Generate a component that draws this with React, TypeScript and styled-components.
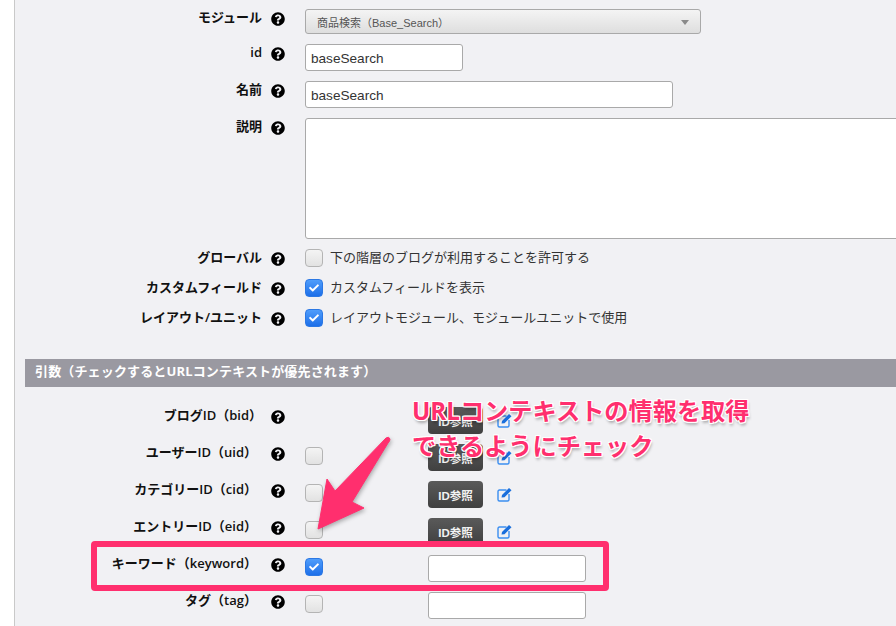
import styled, { createGlobalStyle } from "styled-components";
import { FaQuestionCircle, FaCheck } from "react-icons/fa";

const GlobalStyle = createGlobalStyle`
	html, body {
		margin: 0;
		padding: 0;
		height: 626px;
		overflow: hidden;
		background: #fff;
		font-family: "Liberation Sans", "Noto Sans CJK JP", sans-serif;
		color: #222;
	}
`

const Page = styled.div`
	position: relative;
	width: 896px;
	height: 626px;
	overflow: hidden;
	padding-left: 14px;
	box-sizing: border-box;
`

const Panel = styled.main`
	height: 100%;
	background: #f1f1f4;
	border-left: 1px solid #c9c9c9;
	padding-top: 9px;
	box-sizing: border-box;
	display: flex;
	flex-direction: column;
`

const Rows = styled.div<{ $gap: number }>`
	display: flex;
	flex-direction: column;
	gap: ${(p) => p.$gap}px;
`

const Row = styled.div`
	display: flex;
	align-items: flex-start;
`

const Label = styled.label<{ $trim?: number }>`
	width: 247px;
	flex: none;
	box-sizing: border-box;
	padding-right: ${(p) => p.$trim ?? 0}px;
	text-align: right;
	font-family: "Open Sans", "Noto Sans CJK JP", sans-serif;
	font-size: 13px;
	line-height: 16px;
	font-weight: 600;
	color: #111;
	white-space: nowrap;
`

const Help = styled.span`
	display: flex;
	flex: none;
	width: 14px;
	height: 14px;
	margin: 3px 20px 0 9px;
	color: #000;
	font-size: 14px;
`

const Select = styled.div`
	width: 396px;
	height: 25px;
	box-sizing: border-box;
	border: 1px solid #a9a9a9;
	border-radius: 3px;
	background: linear-gradient(#f4f4f4, #dedede);
	display: flex;
	align-items: center;
	justify-content: space-between;
	padding: 1px 11px 0;
	font-size: 11px;
	color: #555;
`

const Caret = styled.span`
	width: 0;
	height: 0;
	border-left: 4px solid transparent;
	border-right: 4px solid transparent;
	border-top: 5px solid #8a8a8a;
`

const TextInput = styled.input<{ $width: number }>`
	width: ${(p) => p.$width}px;
	height: 27px;
	box-sizing: border-box;
	border: 1px solid #a9a9a9;
	border-radius: 3px;
	background: #fff;
	padding: 2px 5px 0;
	margin: 0;
	font: 13.6px "Liberation Sans", sans-serif;
	color: #333;
`

const TextArea = styled.textarea`
	width: 640px;
	height: 121px;
	flex: none;
	box-sizing: border-box;
	border: 1px solid #a9a9a9;
	border-radius: 3px;
	background: #fff;
	margin: 0;
	padding: 5px;
	resize: none;
`

const Box = styled.span<{ $checked?: boolean; $inset?: number }>`
	display: flex;
	align-items: center;
	justify-content: center;
	flex: none;
	width: 18px;
	height: 18px;
	box-sizing: border-box;
	margin-top: ${(p) => p.$inset ?? 0}px;
	border-radius: 4px;
	border: ${(p) => (p.$checked ? "1px solid #2c78e4" : "1.5px solid #b4b4b4")};
	background: ${(p) => (p.$checked ? "linear-gradient(#4f9dfb, #1d6fe9)" : "linear-gradient(#f4f4f4, #e2e2e2)")};
	color: #fff;
	font-size: 10px;
`

const CheckText = styled.span`
	margin-left: 7px;
	font-size: 13px;
	line-height: 18px;
	color: #333;
	white-space: nowrap;
`

const SectionHead = styled.h2`
	margin: 32px 0 20px 10px;
	height: 28px;
	padding-left: 10px;
	background: #9a99a1;
	color: #fff;
	font-family: "Open Sans", "Noto Sans CJK JP", sans-serif;
	font-size: 13px;
	font-weight: 700;
	line-height: 25px;
	letter-spacing: 0.15px;
	white-space: nowrap;
`

const CheckCell = styled.div`
	width: 123px;
	height: 18px;
	flex: none;
`

const RefButton = styled.button`
	width: 55px;
	height: 27px;
	flex: none;
	padding: 0;
	border: 0;
	border-radius: 4px;
	background: linear-gradient(#5a5a5a, #404040);
	color: #f2f2f2;
	font: 700 11.5px "Liberation Sans", "Noto Sans CJK JP", sans-serif;
`

const EditLink = styled.span`
	display: flex;
	align-items: center;
	height: 27px;
	margin-left: 14px;
`

const Highlight = styled.div`
	position: absolute;
	left: 91px;
	top: 541px;
	width: 518px;
	height: 50px;
	box-sizing: border-box;
	border: 6.5px solid #ff2f6e;
	border-radius: 4px;
`

const Note = styled.p`
	position: absolute;
	left: 412px;
	top: 393px;
	margin: 0;
	font-family: "Open Sans", "Noto Sans CJK JP", sans-serif;
	font-size: 24.2px;
	line-height: 35px;
	font-weight: 700;
	color: #ff2f6e;
	white-space: nowrap;
	text-shadow: 1px 0 0 #fff, -1px 0 0 #fff, 0 1px 0 #fff, 0 -1px 0 #fff, 1px 1px 0 #fff, -1px 1px 0 #fff, 1px -1px 0 #fff, -1px -1px 0 #fff, 1px 3px 3px rgba(0, 0, 0, 0.3);
`

const Arrow = styled.svg`
	position: absolute;
	left: 310px;
	top: 430px;
	filter: drop-shadow(1px 2px 2px rgba(0, 0, 0, 0.3));
`

type ArgRow = {
	label: string;
	trim: number;
	check?: "on" | "off";
	tail: "ref" | "input";
}

const args: ArgRow[] = [
	{ label: "ブログID（bid）", trim: 0, tail: "ref" },
	{ label: "ユーザーID（uid）", trim: 5, check: "off", tail: "ref" },
	{ label: "カテゴリーID（cid）", trim: 5, check: "off", tail: "ref" },
	{ label: "エントリーID（eid）", trim: 5, check: "off", tail: "ref" },
	{ label: "キーワード（keyword）", trim: 5, check: "on", tail: "input" },
	{ label: "タグ（tag）", trim: 5, check: "off", tail: "input" },
]

const options = [
	{ label: "グローバル", text: "下の階層のブログが利用することを許可する", checked: false },
	{ label: "カスタムフィールド", text: "カスタムフィールドを表示", checked: true },
	{ label: "レイアウト/ユニット", text: "レイアウトモジュール、モジュールユニットで使用", checked: true },
]

const HelpIcon = () => <Help><FaQuestionCircle /></Help>;

const EditIcon = () => <svg width="15" height="15" viewBox="0 0 15 15">
	<path d="M9.5 3 H2.5 Q1 3 1 4.5 V12.5 Q1 14 2.5 14 H10.5 Q12 14 12 12.5 V7" fill="none" stroke="#3b8ef0" strokeWidth="1.4" />
	<path d="M4.5 10.5 L5 8 L12 1 L14.5 3.2 L7.5 10.2 Z" fill="#1a6fdc" />
</svg>;

const App = () => {
	return <>
		<GlobalStyle />
		<Page>
			<Panel>
				<Rows $gap={10}>
					<Row>
						<Label>モジュール</Label>
						<HelpIcon />
						<Select>
							<span>商品検索（Base_Search）</span>
							<Caret />
						</Select>
					</Row>
					<Row>
						<Label>id</Label>
						<HelpIcon />
						<TextInput $width={158} defaultValue="baseSearch" />
					</Row>
					<Row>
						<Label>名前</Label>
						<HelpIcon />
						<TextInput $width={368} defaultValue="baseSearch" />
					</Row>
					<Row>
						<Label>説明</Label>
						<HelpIcon />
						<TextArea />
					</Row>
					<Rows $gap={12}>
						{options.map((o) => <Row key={o.label}>
							<Label>{o.label}</Label>
							<HelpIcon />
							<Box $checked={o.checked}>{o.checked && <FaCheck />}</Box>
							<CheckText>{o.text}</CheckText>
						</Row>)}
					</Rows>
				</Rows>
				<SectionHead>引数（チェックするとURLコンテキストが優先されます）</SectionHead>
				<Rows $gap={10}>
					{args.map((a) => <Row key={a.label}>
						<Label $trim={a.trim}>{a.label}</Label>
						<HelpIcon />
						<CheckCell>
							{a.check && <Box $checked={a.check === "on"} $inset={3}>{a.check === "on" && <FaCheck />}</Box>}
						</CheckCell>
						{a.tail === "ref" ? <>
							<RefButton>ID参照</RefButton>
							<EditLink><EditIcon /></EditLink>
						</> : <TextInput $width={158} />}
					</Row>)}
				</Rows>
			</Panel>
			<Highlight />
			<Arrow width="84" height="104" viewBox="0 0 84 104">
				<path d="M8 99 L17 49 L25 61 L76 8 Q79 6 80 9 Q80 11 78 13 L42 72 L54 78 Z" fill="#ff2f6e" stroke="#ff2f6e" strokeWidth="1" strokeLinejoin="round" />
			</Arrow>
			<Note>URLコンテキストの情報を取得<br />できるようにチェック</Note>
		</Page>
	</>;
}

export default App;
